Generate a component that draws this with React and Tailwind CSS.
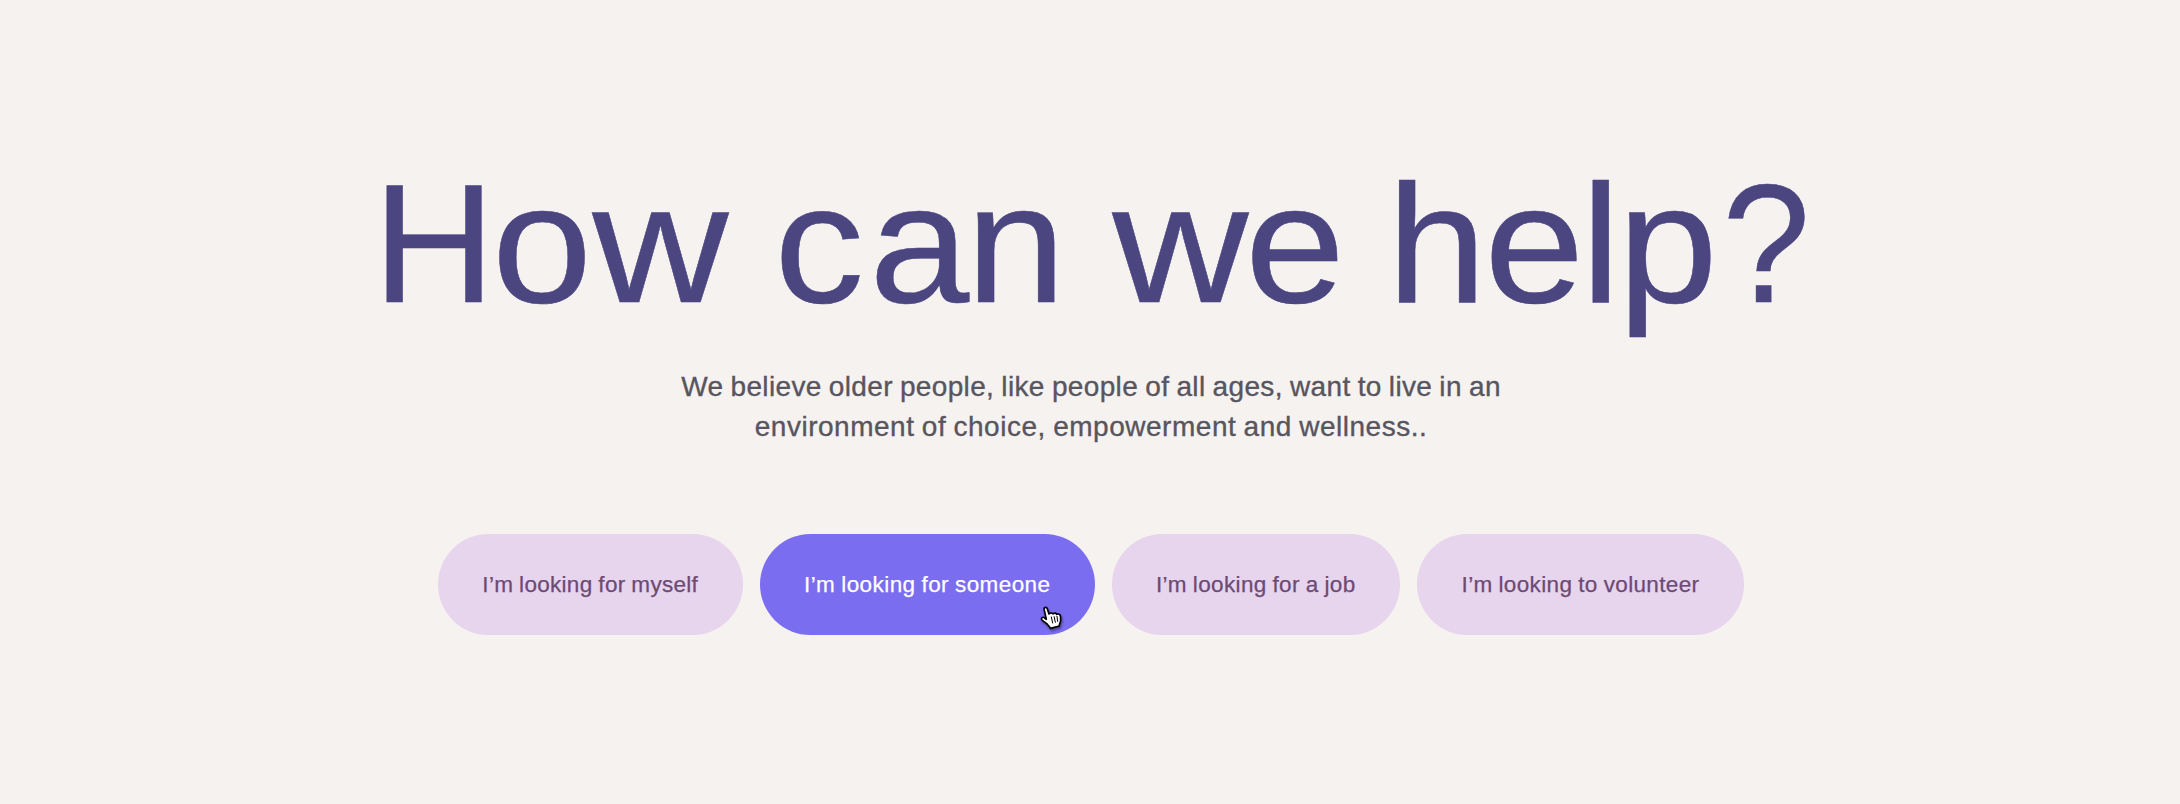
import React from "react";

const choices = [
  { label: "I’m looking for myself", className: "w-[305px] tracking-[0.3px] bg-[#e7d4ed] text-[#6c4a74]" },
  { label: "I’m looking for someone", className: "w-[335px] tracking-[0.42px] bg-[#7a6def] text-white", active: true },
  { label: "I’m looking for a job", className: "w-[288px] tracking-[0.35px] bg-[#e7d4ed] text-[#6c4a74]" },
  { label: "I’m looking to volunteer", className: "w-[327.5px] tracking-[0.36px] bg-[#e7d4ed] text-[#6c4a74]" },
];

function HandCursor() {
  return (
    <svg
      className="absolute left-[280px] top-[72px] h-[24px] w-[22px] overflow-visible drop-shadow-[1px_2px_1px_rgba(0,0,0,0.4)]"
      viewBox="0 0 66 72"
      aria-hidden="true"
    >
      <path
        d="M12.500 11C11 3 19.500 1.500 22 8L27 24C30 20 37 20 39 24C43 20 49 21 50 25C55 22 61 26 61.500 31L62 43C62 50 57 52 58 60L31 67C29 61 25 58 20 53C15 47 8 46 4.500 40C3 34 10 32 14 36L19 40Z"
        fill="#fff"
        stroke="#000"
        strokeWidth="5"
        strokeLinejoin="round"
      />
      <path d="M34 33L38 51M42.500 32L46 49M51 31L53 46" fill="none" stroke="#000" strokeWidth="3" strokeLinecap="round" />
    </svg>
  );
}

export default function App() {
  return (
    <main className="flex h-[804px] w-full flex-col bg-[#f5f2ef] pt-[148px] pl-[2px] font-['Liberation_Sans',Arial,sans-serif]">
      <h1 className="ml-[371px] flex h-[193px] origin-left scale-x-107 self-start whitespace-nowrap text-[168px] leading-[193px] text-[#4b4580] [-webkit-text-stroke:0.5px_#4b4580]">
        <span>
          <span className="mr-[-10.2px] inline-block origin-left scale-x-94">H</span>o
          <span className="inline-block origin-left scale-x-105">w</span>
        </span>
        <span className="ml-[49px]">
          <span className="tracking-[4.8px]">c</span>
          <span className="tracking-[-3.2px]">a</span>n
        </span>
        <span className="ml-[43.2px]">
          <span className="mr-[3px] inline-block origin-left scale-x-105">w</span>e
        </span>
        <span className="ml-[39.2px]">
          <span className="tracking-[-2.4px]">h</span>
          <span className="tracking-[-3.3px]">e</span>
          <span className="tracking-[-2.7px]">l</span>
          <span className="tracking-[4px]">p</span>
          <span className="inline-block origin-left scale-x-88">?</span>
        </span>
      </h1>
      <p className="mt-[26px] flex flex-col items-center text-[28px] leading-[40px] text-[#58555f] [-webkit-text-stroke:0.35px_#58555f]">
        <span className="whitespace-nowrap tracking-[0.35px] [word-spacing:-1px]">We believe older people, like people of all ages, want to live in an</span>
        <span className="whitespace-nowrap tracking-[0.52px] [word-spacing:-1px]">environment of choice, empowerment and wellness..</span>
      </p>
      <div className="mt-[87px] flex justify-center gap-[17px]">
        {choices.map(({ label, className, active }) => (
          <button
            key={label}
            type="button"
            className={`relative flex h-[101px] shrink-0 items-center justify-center whitespace-nowrap rounded-full text-[22.5px] leading-[26px] [word-spacing:-0.7px] [-webkit-text-stroke:0.25px_currentColor] ${className}`}
          >
            {label}
            {active && <HandCursor />}
          </button>
        ))}
      </div>
    </main>
  );
}
